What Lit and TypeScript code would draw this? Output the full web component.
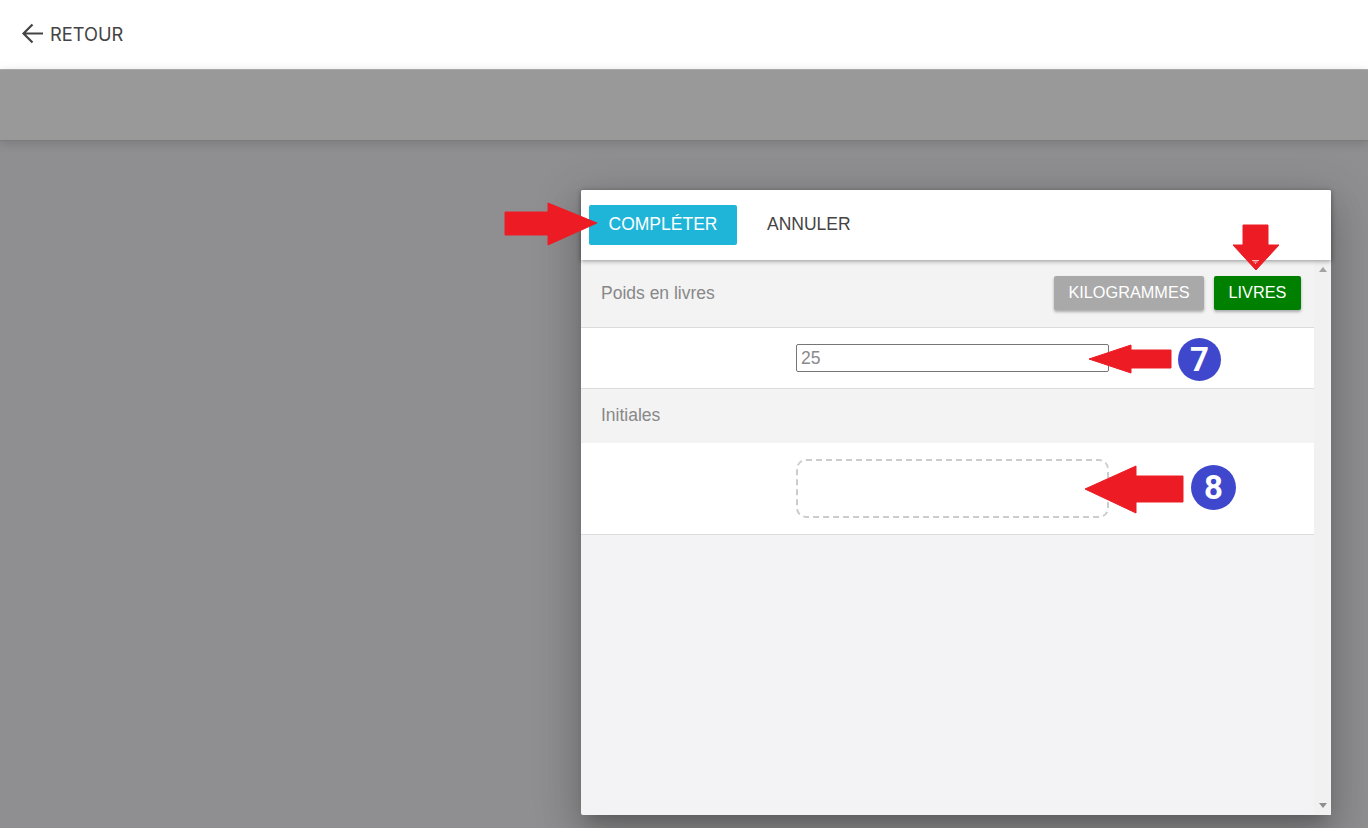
import { LitElement, css, html, svg } from 'lit';
import { customElement } from 'lit/decorators.js';

// red annotation arrows, given as [left, top, width, height, points]
const ARROWS: [number, number, number, number, string][] = [
  [504, 202, 94, 44, '1,10 44,10 44,1 93,21 44,43 44,33 1,33'],
  [1232, 224, 48, 47, '11,1 36,1 36,21 47,21 24,46 1,21 11,21'],
  [1088, 344, 84, 30, '1,15 43,1 43,6 83,6 83,24 43,24 43,29'],
  [1084, 465, 100, 49, '1,24 52,1 52,11 99,11 99,37 52,37 52,48'],
];

@customElement('app-root')
export class AppRoot extends LitElement {
  static override styles = css`
    :host {
      display: block;
      position: relative;
      height: 828px;
      overflow: hidden;
      background: #8f8f91;
      font-family: 'Liberation Sans', Arial, sans-serif;
    }
    .topbar {
      height: 67px;
      background: #fff;
      border-bottom: 1px solid #b0b0b0;
      display: flex;
      align-items: center;
      padding: 0 0 2px 21px;
      gap: 6px;
      color: #444;
    }
    .back-label {
      font-family: 'Inter', sans-serif;
      font-size: 18.3px;
    }
    .subbar {
      height: 70px;
      background: #999;
      border-bottom: 1px solid #7c7c7c;
      box-shadow: 0 2px 10px rgba(0, 0, 0, 0.16);
    }
    .dialog {
      position: absolute;
      left: 581px;
      top: 190px;
      width: 750px;
      height: 625px;
      background: #f3f3f5;
      border-radius: 2px;
      box-shadow: 0 11px 15px -7px rgba(0, 0, 0, 0.2), 0 24px 38px 3px rgba(0, 0, 0, 0.14),
        0 9px 46px 8px rgba(0, 0, 0, 0.12);
      display: flex;
      flex-direction: column;
    }
    .actions {
      height: 70px;
      background: #fff;
      border-radius: 2px 2px 0 0;
      box-shadow: 0 1px 5px rgba(0, 0, 0, 0.4);
      display: flex;
      align-items: center;
      padding: 0 8px;
      gap: 16px;
      position: relative;
    }
    button {
      font-family: 'Liberation Sans', Arial, sans-serif;
      border: none;
      cursor: pointer;
    }
    .complete {
      width: 148px;
      height: 40px;
      background: #1eb5d9;
      color: #fff;
      font-size: 17.5px;
      border-radius: 2px;
      padding: 0 0 2px;
    }
    .cancel {
      background: none;
      color: #444;
      font-size: 17.5px;
      padding: 0 14px 2px;
      height: 40px;
    }
    .body {
      flex: 1;
      display: flex;
      min-height: 0;
    }
    .rows {
      flex: 1;
      min-width: 0;
    }
    .scroll {
      width: 17px;
      background: #f1f1f1;
      display: flex;
      flex-direction: column;
      justify-content: space-between;
      align-items: center;
      padding: 7px 0;
      box-sizing: border-box;
    }
    .tri-up {
      border: 4px solid transparent;
      border-top: none;
      border-bottom: 5px solid #a3a3a3;
    }
    .tri-down {
      border: 4px solid transparent;
      border-bottom: none;
      border-top: 5px solid #8f8f8f;
    }
    .head {
      display: flex;
      align-items: center;
      justify-content: space-between;
      padding: 0 13px 0 20px;
      background: #f3f3f3;
      color: #888;
      font-size: 17.5px;
    }
    .head.weight {
      height: 67px;
      border-bottom: 1px solid #dcdcdc;
    }
    .head.initials {
      height: 52px;
      padding-bottom: 2px;
    }
    .units {
      display: flex;
      gap: 10px;
      margin-bottom: 2px;
    }
    .unit {
      height: 34px;
      color: #fff;
      font-family: 'Liberation Sans', Arial, sans-serif;
      font-size: 16.3px;
      border-radius: 2px;
      padding: 0;
      box-shadow: 0 2px 3px rgba(0, 0, 0, 0.3);
    }
    .unit.kg {
      width: 150px;
      background: #a9a9a9;
    }
    .unit.lb {
      width: 87px;
      background: #008000;
    }
    .row {
      background: #fff;
      border-bottom: 1px solid #dcdcdc;
      padding-left: 215px;
      display: flex;
      align-items: center;
    }
    .row.input-row {
      height: 60px;
    }
    .row.sign-row {
      height: 91px;
    }
    .weight-input {
      width: 313px;
      height: 28px;
      box-sizing: border-box;
      border: 1px solid #767676;
      border-radius: 2px;
      padding: 0 4px;
      font-family: 'Liberation Sans', Arial, sans-serif;
      font-size: 17.5px;
      color: #8a8a8a;
      outline: none;
    }
    .signature {
      width: 313px;
      height: 59px;
      box-sizing: border-box;
      border: 2px dashed #ccc;
      border-radius: 10px;
    }
    .arrow {
      position: absolute;
      display: block;
    }
    .badge {
      position: absolute;
      border-radius: 50%;
      background: #3f48cc;
      color: #fff;
      font-family: 'Roboto', sans-serif;
      font-weight: 700;
      display: flex;
      align-items: center;
      justify-content: center;
    }
    .badge.seven {
      left: 1178px;
      top: 338px;
      width: 43px;
      height: 43px;
      font-size: 33px;
    }
    .badge.eight {
      left: 1191px;
      top: 465px;
      width: 45px;
      height: 45px;
      font-size: 33px;
    }
    .filter-mark {
      position: absolute;
      left: 1252px;
      top: 260px;
      width: 7px;
      height: 4px;
      display: block;
    }
  `;

  private renderArrow([left, top, w, h, points]: [number, number, number, number, string]) {
    return html`<svg
      class="arrow"
      style="left:${left}px;top:${top}px"
      width=${w}
      height=${h}
      viewBox="0 0 ${w} ${h}"
    >
      ${svg`<polygon points=${points} fill="#ed1c24" stroke="#ed1c24" stroke-width="1" stroke-linejoin="round"></polygon>`}
    </svg>`;
  }

  override render() {
    return html`
      <div class="topbar">
        <svg width="23" height="23" viewBox="0 0 23 23" fill="none" stroke="#444" stroke-width="2.2">
          <path d="M22 11.5H3M11.5 2.5l-9 9 9 9"></path>
        </svg>
        <span class="back-label">RETOUR</span>
      </div>
      <div class="subbar"></div>

      <div class="dialog">
        <div class="actions">
          <button class="complete">COMPLÉTER</button>
          <button class="cancel">ANNULER</button>
        </div>
        <div class="body">
          <div class="rows">
            <div class="head weight">
              <span>Poids en livres</span>
              <div class="units">
                <button class="unit kg">KILOGRAMMES</button>
                <button class="unit lb">LIVRES</button>
              </div>
            </div>
            <div class="row input-row">
              <input class="weight-input" value="25" />
            </div>
            <div class="head initials"><span>Initiales</span></div>
            <div class="row sign-row"><div class="signature"></div></div>
          </div>
          <div class="scroll">
            <div class="tri-up"></div>
            <div class="tri-down"></div>
          </div>
        </div>
      </div>

      ${ARROWS.map((a) => this.renderArrow(a))}
      <svg class="filter-mark" viewBox="0 0 7 4">
        <path d="M0 0.5H7M1.5 2H5.5M3 3.5H4" stroke="#f4c0c0" stroke-width="1"></path>
      </svg>
      <div class="badge seven">7</div>
      <div class="badge eight">8</div>
    `;
  }
}
